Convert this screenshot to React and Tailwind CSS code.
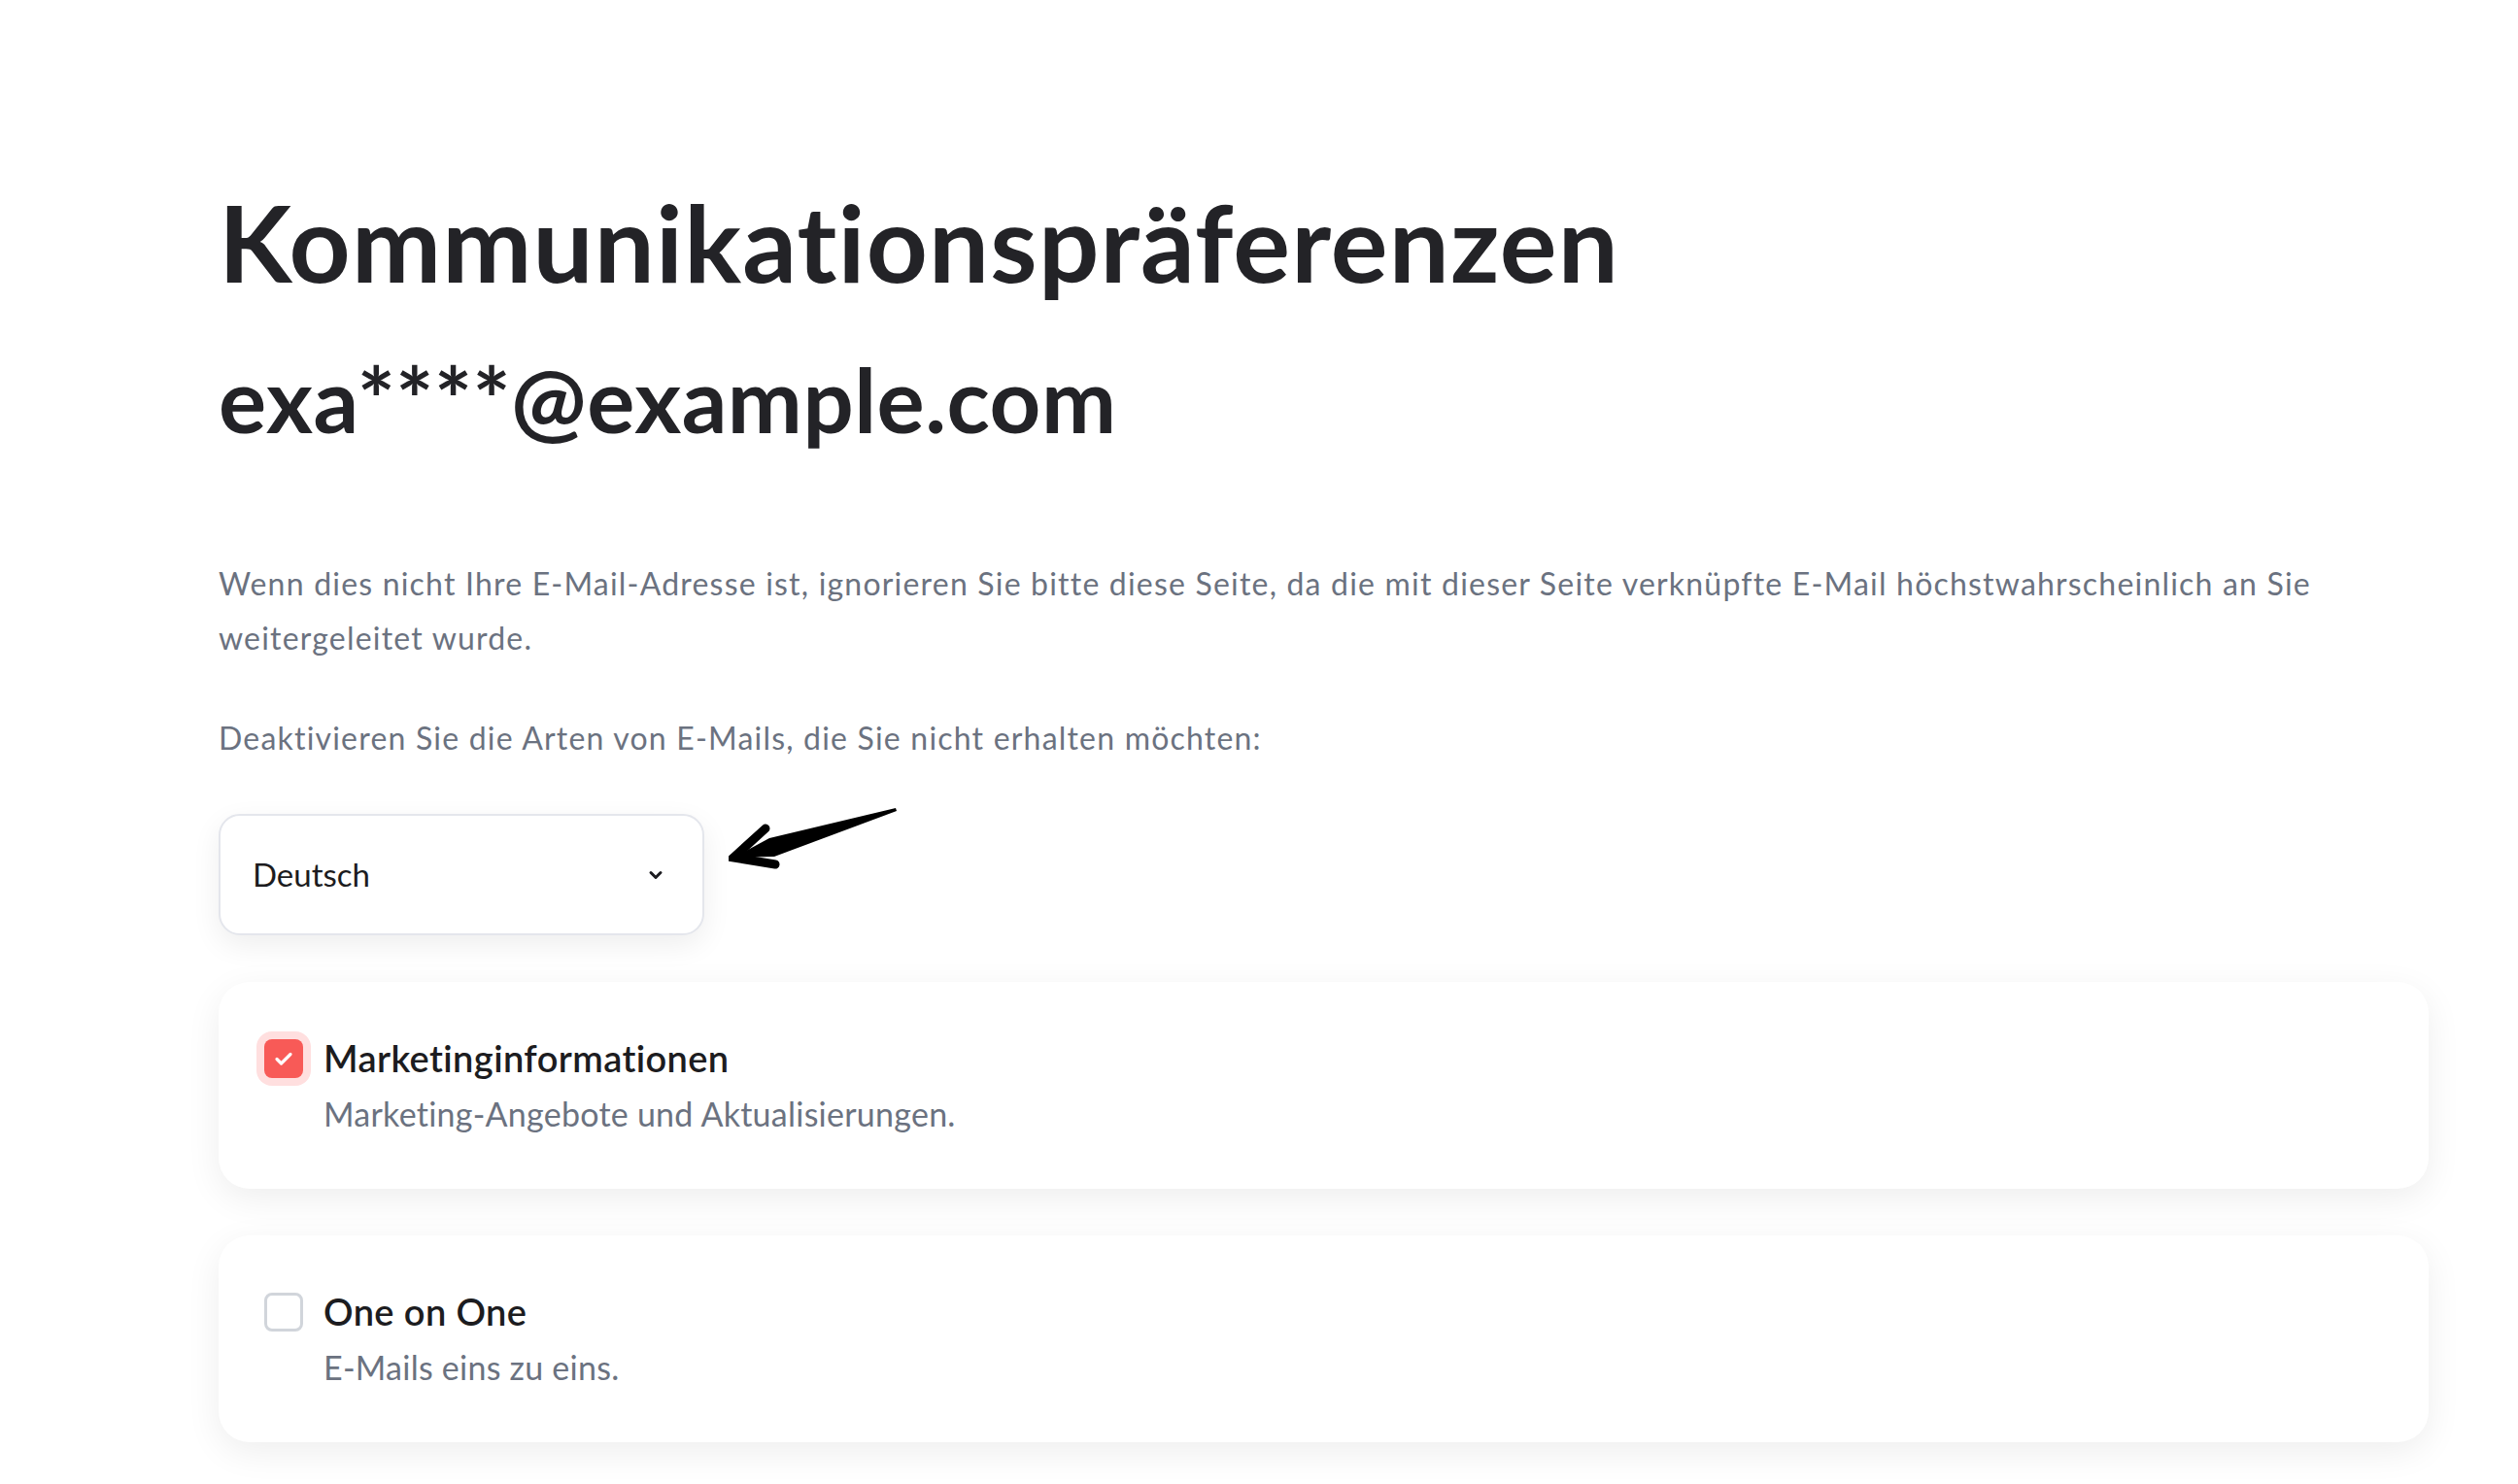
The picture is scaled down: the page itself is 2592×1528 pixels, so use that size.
import React from "react";

function Arrow() {
  return (
    <svg
      className="absolute left-[525px] top-[-13px]"
      width="180"
      height="80"
      viewBox="0 0 180 80"
    >
      <polygon points="5,58 42,38 172,7 173,10 47,57" fill="#000" />
      <polyline
        points="38,28 5,58 48,65"
        fill="none"
        stroke="#000"
        strokeWidth="9"
        strokeLinecap="round"
        strokeLinejoin="miter"
      />
    </svg>
  );
}

function Card({ checked, title, desc }) {
  return (
    <div className="rounded-[32px] bg-white shadow-[0_10px_36px_rgba(0,0,0,0.07)] pl-[47px] pr-[47px] pt-[54px] pb-[55px]">
      <div className="flex items-start">
        <div className="mt-[5px] shrink-0">
          {checked ? (
            <div className="w-[40px] h-[40px] rounded-[8px] bg-[#f85a57] ring-[8px] ring-[#ffdfdf] flex items-center justify-center">
              <svg width="24" height="24" viewBox="0 0 24 24">
                <path
                  d="M5 12.5l4.5 4.5L19 7.5"
                  fill="none"
                  stroke="#fff"
                  strokeWidth="3.2"
                  strokeLinecap="round"
                  strokeLinejoin="round"
                />
              </svg>
            </div>
          ) : (
            <div className="w-[40px] h-[40px] rounded-[8px] border-[3px] border-[#d1d5db] bg-white" />
          )}
        </div>
        <div className="ml-[21px] flex flex-col">
          <div className="text-[38px] leading-[48px] font-semibold tracking-[0.4px] text-[#1c1c20]">
            {title}
          </div>
          <div className="mt-[12px] text-[34px] leading-[44px] tracking-[0.25px] text-[#6b7280]">
            {desc}
          </div>
        </div>
      </div>
    </div>
  );
}

export default function App() {
  return (
    <div
      className="min-h-[1528px] bg-white"
      style={{ fontFamily: "Lato, 'Noto Sans', sans-serif" }}
    >
      <div className="pl-[225px] pr-[92px] pt-[193px]">
        <h1 className="text-[110px] leading-[110px] font-bold text-[#232327] tracking-[1.2px]">
          Kommunikationspräferenzen
        </h1>
        <h2 className="mt-[62px] text-[92px] leading-[92px] font-bold text-[#232327] tracking-[0.5px]">
          exa****@example.com
        </h2>
        <p className="mt-[116px] text-[32px] leading-[56px] tracking-[1.2px] text-[#6b7280]">
          Wenn dies nicht Ihre E-Mail-Adresse ist, ignorieren Sie bitte diese
          Seite, da die mit dieser Seite verknüpfte E-Mail höchstwahrscheinlich
          an Sie
          <br />
          weitergeleitet wurde.
        </p>
        <p className="mt-[47px] text-[32px] leading-[56px] tracking-[1.2px] text-[#6b7280]">
          Deaktivieren Sie die Arten von E-Mails, die Sie nicht erhalten
          möchten:
        </p>
        <div className="relative mt-[50px]">
          <div className="w-[500px] h-[125px] rounded-[22px] border-2 border-[#e4e6ec] bg-white shadow-[0_10px_30px_rgba(0,0,0,0.07)] flex items-center justify-between pl-[33px] pr-[39px]">
            <span className="text-[33px] text-[#1c1c20]">Deutsch</span>
            <svg width="18" height="18" viewBox="0 0 18 18">
              <path
                d="M4 6.5l5 5 5-5"
                fill="none"
                stroke="#1c1c20"
                strokeWidth="3"
                strokeLinecap="round"
                strokeLinejoin="round"
              />
            </svg>
          </div>
          <Arrow />
        </div>
        <div className="mt-[48px] flex flex-col gap-[48px]">
          <Card
            checked
            title="Marketinginformationen"
            desc="Marketing-Angebote und Aktualisierungen."
          />
          <Card title="One on One" desc="E-Mails eins zu eins." />
        </div>
      </div>
    </div>
  );
}
